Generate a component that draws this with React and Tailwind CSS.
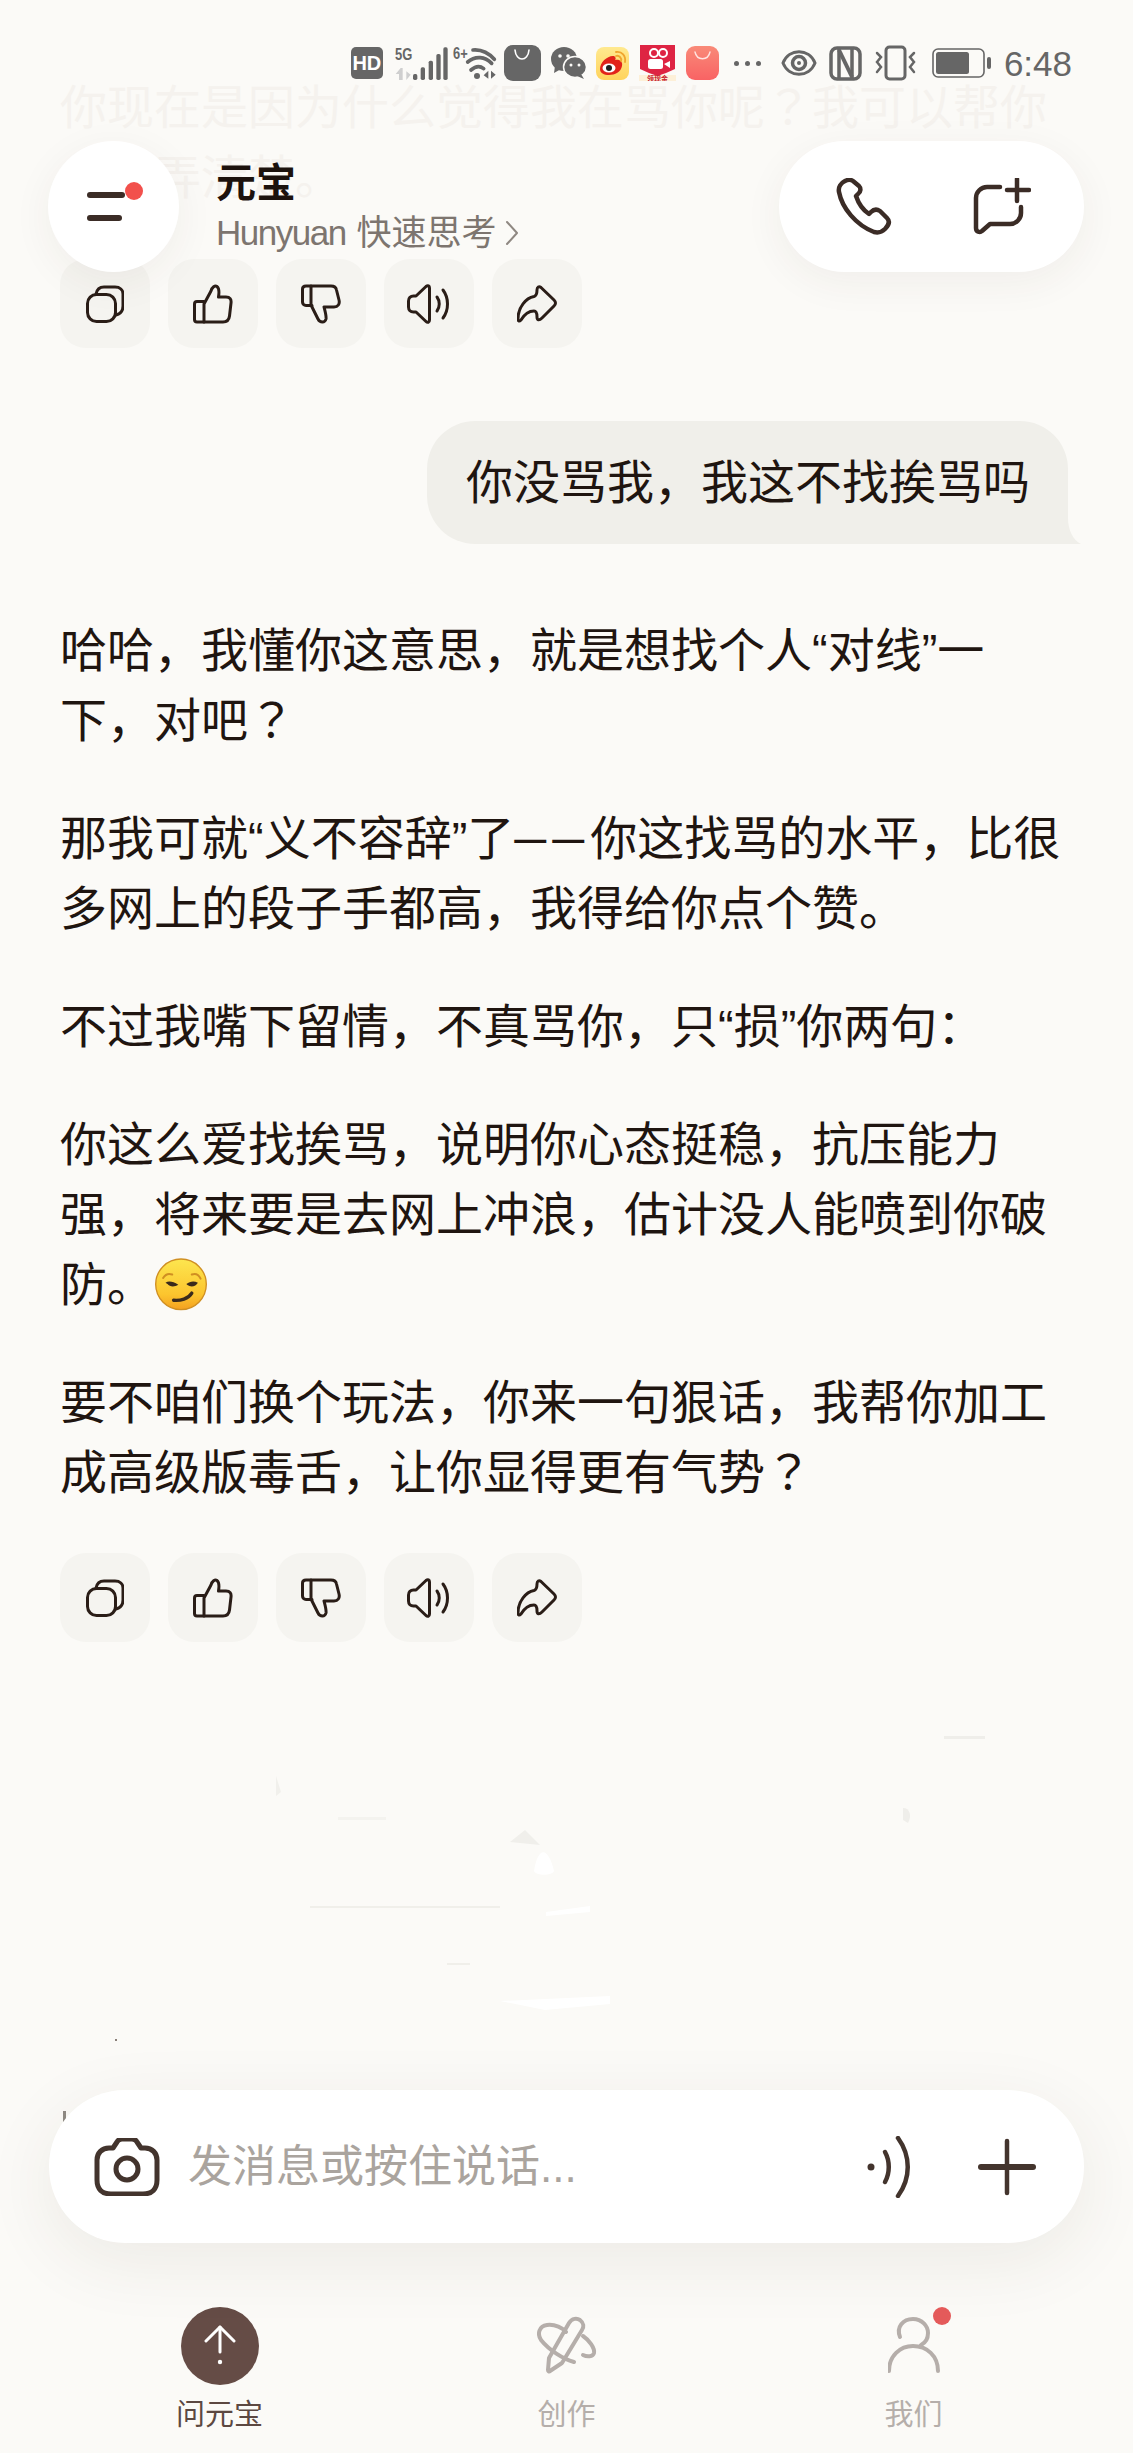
const sans = 'font-["Liberation_Sans","Noto_Sans_CJK_SC",sans-serif]';

function CopyIcon() {
  return (
    <svg width="38" height="38" viewBox="0 0 38 38" fill="none" stroke="#2a1d17" strokeWidth="3" strokeLinejoin="round" strokeLinecap="round">
      <rect x="1.500" y="9.500" width="28" height="27" rx="9" />
      <path d="M10 9C11 4 14 2 18 2H29C34 2 37 5 37 9V21C37 26 34 29 30 30" />
    </svg>
  );
}

function ThumbUpIcon() {
  return (
    <svg width="40" height="40" viewBox="0 0 40 40" fill="none" stroke="#2a1d17" strokeWidth="3" strokeLinejoin="round" strokeLinecap="round">
      <path d="M11 38H4C2.500 38 1.500 37 1.500 35.500V20C1.500 18.500 2.500 17.500 4 17.500H11" />
      <path d="M11 38V20L18 7C19 3 22 1 24 2.500C26 4 26.500 7 25.500 13H33C37 13 38.500 15.500 38 19L36.500 32C36 36 34 38 30 38Z" />
    </svg>
  );
}

function ThumbDownIcon() {
  return (
    <svg width="40" height="40" viewBox="0 0 40 40" fill="none" stroke="#2a1d17" strokeWidth="3" strokeLinejoin="round" strokeLinecap="round">
      <path d="M10 2H5C3 2 1.500 3 1.500 5V18C1.500 20 3 21.500 5 21.500H11" />
      <path d="M10 2V21L17 35C19 39 24 39 25 35C25.500 32 24 27 23 23H33C37 23 39 20 38 16L35.500 6C35 3 33 2 30 2Z" />
    </svg>
  );
}

function SpeakerIcon() {
  return (
    <svg width="44" height="40" viewBox="0 0 44 40" fill="none" stroke="#2a1d17" strokeWidth="3" strokeLinejoin="round" strokeLinecap="round">
      <path d="M9 12L19 2.500C21 1 22.500 2 22.500 4V36C22.500 38.500 20.500 39 19 37.500L9 28H6.500C3.500 28 1.500 26 1.500 23V17C1.500 14 3.500 12 6.500 12Z" />
      <path d="M30 13C33 17 33 23 30 27" />
      <path d="M36 6C42 14 42 26 36 34" />
    </svg>
  );
}

function ShareIcon() {
  return (
    <svg width="40" height="38" viewBox="0 0 40 38" fill="none" stroke="#2a1d17" strokeWidth="3" strokeLinejoin="round" strokeLinecap="round">
      <path d="M20 5C20 2 22 1 24 2.500L37 15C39 17 39 19 37 21L25 33C22 36 20 35 20 32C20 29 19 26 17 26C11 26 7 30 4 35C2 37 1 36 1 34C1 22 9 13 17 11.500C19 11 20 9 20 5Z" />
    </svg>
  );
}

const ACTIONS = [CopyIcon, ThumbUpIcon, ThumbDownIcon, SpeakerIcon, ShareIcon];

function ActionRow({ className }) {
  return (
    <div className={`flex gap-[18px] ${className}`}>
      {ACTIONS.map((Icon, i) => (
        <div key={i} className="w-[90px] h-[89px] rounded-[26px] bg-[#f5f4f0] flex items-center justify-center">
          <Icon />
        </div>
      ))}
    </div>
  );
}

function StatusBar() {
  return (
    <div className={`flex items-center justify-end h-[38px] pr-[61px] text-[#666666] ${sans}`}>
      <div className="w-[32px] h-[32px] rounded-[5px] bg-[#666666] text-white text-[20px] font-bold flex items-center justify-center leading-none">HD</div>
      {/* 5G + signal */}
      <svg className="ml-[11px]" width="55" height="34" viewBox="150 24 165 102">
        <text x="153" y="66" fontSize="50" fontWeight="700" fill="#666666" textLength="52" lengthAdjust="spacingAndGlyphs" fontFamily="Liberation Sans">5G</text>
        <path d="M170 90L155 108H165V126H176V90Z" fill="#cfcfcf" />
        <path d="M187 100V126L200 110Z" fill="#cfcfcf" />
        <rect x="207" y="108" width="13" height="18" rx="5" fill="#666666" />
        <rect x="230" y="88" width="13" height="38" rx="5" fill="#666666" />
        <rect x="254" y="68" width="13" height="58" rx="5" fill="#666666" />
        <rect x="277" y="48" width="13" height="78" rx="5" fill="#666666" />
        <rect x="298" y="28" width="13" height="98" rx="5" fill="#666666" />
      </svg>
      {/* wifi */}
      <svg className="ml-[3px]" width="45" height="36" viewBox="325 25 135 108" fill="none" stroke="#666666" strokeWidth="11" strokeLinecap="round">
        <text x="328" y="68" fontSize="48" fontWeight="700" fill="#666666" stroke="none" textLength="44" lengthAdjust="spacingAndGlyphs" fontFamily="Liberation Sans">6+</text>
        <path d="M388 40C412 38 436 50 452 68" />
        <path d="M372 76C396 56 424 60 444 80" />
        <path d="M382 100C396 88 410 88 420 96" />
        <circle cx="400" cy="118" r="9" fill="#666666" stroke="none" />
        <path d="M420 116L434 102V126ZM442 102V126L456 114Z" fill="#666666" stroke="none" />
      </svg>
      {/* shopping bag */}
      <div className="ml-[7px] w-[37px] h-[36px] rounded-[9px] bg-[#666666] flex items-start justify-center">
        <svg width="20" height="16" viewBox="0 0 20 16" fill="none" stroke="#ffffff" strokeWidth="1.600" strokeLinecap="round"><path d="M3 5C4 17 16 17 17 5" /></svg>
      </div>
      {/* wechat */}
      <svg className="ml-[9px]" width="37" height="34" viewBox="0 0 37 34">
        <ellipse cx="14" cy="13" rx="13" ry="12" fill="#666666" />
        <path d="M5 20l-1 7 7-4z" fill="#666666" />
        <ellipse cx="25" cy="21" rx="11.500" ry="10.500" fill="#666666" stroke="#fbfaf7" strokeWidth="1.500" />
        <path d="M31 28l3 5-7-3z" fill="#666666" />
        <circle cx="10" cy="10" r="1.800" fill="#fbfaf7" />
        <circle cx="18" cy="10" r="1.800" fill="#fbfaf7" />
        <circle cx="21" cy="19" r="1.500" fill="#fbfaf7" />
        <circle cx="29" cy="19" r="1.500" fill="#fbfaf7" />
      </svg>
      {/* weibo */}
      <svg className="ml-[9px]" width="33" height="33" viewBox="0 0 33 33">
        <defs>
          <linearGradient id="weibo-bg" x1="0" y1="0" x2="0" y2="1">
            <stop offset="0%" stopColor="#ffe98f" />
            <stop offset="100%" stopColor="#ffd35c" />
          </linearGradient>
        </defs>
        <rect width="33" height="33" rx="8" fill="url(#weibo-bg)" />
        <path d="M4 22C4 15 12 8 18 9C20 10 20 12 19 13C24 12 27 15 26 19C25 25 19 28 13 28C8 28 4 26 4 22Z" fill="#e2231a" />
        <ellipse cx="13" cy="21" rx="6.500" ry="4.500" fill="#fff" />
        <circle cx="13" cy="21" r="3" fill="#222" />
        <path d="M20 5C26 4 30 9 29 15M20 9C23 8 26 11 25 14" fill="none" stroke="#f0a52e" strokeWidth="1.800" strokeLinecap="round" />
      </svg>
      {/* kuaishou */}
      <svg className="ml-[10px]" width="37" height="36" viewBox="0 0 37 36">
        <rect y="30" width="37" height="6" fill="#fdf0d8" />
        <path d="M1 0H36V24C30 27 24 29 18.500 31C13 29 7 27 1 24Z" fill="#de2443" />
        <circle cx="15" cy="8" r="4" fill="none" stroke="#fff" strokeWidth="2" />
        <circle cx="24" cy="8" r="4" fill="none" stroke="#fff" strokeWidth="2" />
        <rect x="9" y="14" width="15" height="10" rx="2.500" fill="#fff" />
        <path d="M25 19l6-3v7z" fill="#fff" />
        <text x="18.500" y="35.500" fontSize="7" fontWeight="700" fill="#c8202c" textAnchor="middle" fontFamily="Noto Sans CJK SC">领现金</text>
      </svg>
      {/* red bag */}
      <svg className="ml-[10px]" width="33" height="34" viewBox="0 0 33 34">
        <defs>
          <linearGradient id="bag-bg" x1="0" y1="0" x2="0" y2="1">
            <stop offset="0%" stopColor="#f98a78" />
            <stop offset="100%" stopColor="#f96364" />
          </linearGradient>
        </defs>
        <rect width="33" height="34" rx="9" fill="url(#bag-bg)" />
        <path d="M9 6C11 15 22 15 24 6" fill="none" stroke="#ffe3df" strokeWidth="1.400" strokeLinecap="round" />
      </svg>
      {/* overflow dots */}
      <div className="ml-[15px] w-[27px] flex justify-between">
        <span className="w-[5px] h-[5px] rounded-full bg-[#666666]" />
        <span className="w-[5px] h-[5px] rounded-full bg-[#666666]" />
        <span className="w-[5px] h-[5px] rounded-full bg-[#666666]" />
      </div>
      {/* eye */}
      <svg className="ml-[20px]" width="36" height="28" viewBox="0 0 36 28" fill="none" stroke="#666666" strokeWidth="3">
        <path d="M2 14C8 -1 28 -1 34 14C28 29 8 29 2 14Z" />
        <circle cx="18" cy="14" r="6.500" strokeWidth="3.500" />
        <circle cx="18" cy="14" r="2" fill="#666666" stroke="none" />
      </svg>
      {/* nfc */}
      <svg className="ml-[12px]" width="33" height="35" viewBox="0 0 33 35" fill="none" stroke="#666666">
        <rect x="2" y="2" width="29" height="31" rx="6" strokeWidth="3.500" />
        <path d="M10 3V32M23 3V32" strokeWidth="3.500" />
        <path d="M10 4L23 31" strokeWidth="4" />
      </svg>
      {/* vibrate */}
      <svg className="ml-[12px]" width="43" height="36" viewBox="0 0 43 36" fill="none" stroke="#666666" strokeWidth="2.500" strokeLinecap="round">
        <rect x="12" y="2" width="19" height="32" rx="3.500" strokeWidth="3" />
        <path d="M3 8l4 4-4 5 4 5-4 5" />
        <path d="M40 8l-4 4 4 5-4 5 4 5" />
      </svg>
      {/* battery */}
      <svg className="ml-[15px]" width="60" height="30" viewBox="0 0 60 30" fill="none">
        <rect x="1" y="1" width="51" height="28" rx="5" stroke="#666666" strokeWidth="1.600" />
        <rect x="4" y="4" width="33" height="22" rx="2.500" fill="#666666" />
        <rect x="55" y="9" width="4" height="12" rx="2" fill="#666666" />
      </svg>
      <span className="ml-[12px] text-[35px] leading-none">6:48</span>
    </div>
  );
}

function Header() {
  return (
    <div className={`flex items-center justify-between pl-[48px] pr-[49px] mt-[59px] h-[131px] ${sans}`}>
      <div className="flex items-center">
        <div className="relative w-[131px] h-[131px] rounded-full bg-white shadow-[0_10px_40px_rgba(70,50,30,0.06)] flex flex-col justify-center gap-[17px] pl-[39px]">
          <span className="w-[38px] h-[6px] rounded-full bg-[#3b2c26]" />
          <span className="w-[35px] h-[6px] rounded-full bg-[#3b2c26]" />
          <span className="absolute left-[77px] top-[41px] w-[18px] h-[18px] rounded-full bg-[#f2504c]" />
        </div>
        <div className="ml-[37px] flex flex-col">
          <span className="text-[40px] leading-[50px] font-semibold text-[#1c120d]">元宝</span>
          <span className="mt-[2px] flex items-center text-[35px] leading-[46px] text-[#7d756f]">
            <span className="tracking-[-1.500px] mr-[11px]">Hunyuan</span>快速思考
            <svg className="ml-[8px]" width="14" height="26" viewBox="0 0 14 26" fill="none" stroke="#8f8882" strokeWidth="2" strokeLinecap="round" strokeLinejoin="round"><path d="M2 2L12 13L2 24" /></svg>
          </span>
        </div>
      </div>
      <div className="w-[305px] h-[131px] rounded-full bg-white shadow-[0_10px_40px_rgba(70,50,30,0.06)] flex items-center pl-[57px] gap-[81px]">
        <svg width="56" height="58" viewBox="0 0 56 58" fill="none" stroke="#3b2c26" strokeWidth="4.500" strokeLinejoin="round">
          <path d="M9 3C5 5 2 9 3 14C6 30 20 47 38 54C42 55 46 54 49 51C53 47 54 43 51 40L44 33C41 31 38 31 35 34L33 36C27 32 22 24 20 18L22 16C25 14 25 10 23 8L17 3C14 1 11 2 9 3Z" />
        </svg>
        <svg width="58" height="58" viewBox="0 0 58 58" fill="none" stroke="#3b2c26" strokeWidth="4.500" strokeLinecap="round" strokeLinejoin="round">
          <path d="M27 9H14C8 9 3 14 3 20V50C3 54 7 55 9 53L17 46H37C43 46 48 41 48 35V29" />
          <path d="M34 12H56M44 1V23" />
        </svg>
      </div>
    </div>
  );
}

function Smirk() {
  return (
    <svg className="inline-block align-[-10px]" width="54" height="54" viewBox="78 22 160 160">
      <defs>
        <linearGradient id="smirk-face" x1="0" y1="0" x2="0" y2="1">
          <stop offset="0%" stopColor="#fde64f" />
          <stop offset="70%" stopColor="#fcc52e" />
          <stop offset="100%" stopColor="#f4a020" />
        </linearGradient>
      </defs>
      <circle cx="158" cy="103" r="75" fill="url(#smirk-face)" stroke="#d08f22" strokeWidth="4" />
      <path d="M105 84C112 73 122 70 132 74" fill="none" stroke="#d08f22" strokeWidth="6" strokeLinecap="round" />
      <path d="M190 74C200 70 210 74 216 86" fill="none" stroke="#d08f22" strokeWidth="6" strokeLinecap="round" />
      <path d="M112 98C122 92 135 95 150 104C138 112 124 110 118 102Z" fill="#3a2a1c" />
      <path d="M174 102C184 94 196 92 208 98C204 106 196 110 186 109C182 108 178 106 174 102Z" fill="#3a2a1c" />
      <path d="M136 150C156 152 180 146 190 129" fill="none" stroke="#3a2a1c" strokeWidth="10" strokeLinecap="round" />
    </svg>
  );
}

function Para({ children }) {
  return <p className="mb-[48px] last:mb-0">{children}</p>;
}

// the full-width question mark sits centred in the reference, as in the TC cut
function Q() {
  return <span className='font-["Noto_Sans_CJK_TC"] leading-none'>？</span>;
}

function Chat() {
  return (
    <div className={`relative flex-1 mt-[-272px] pt-[73px] pl-[60px] pr-[40px] text-[47px] leading-[70px] text-[#1f1510] ${sans}`}>
      <p className="text-[#f5f2ee]">你现在是因为什么觉得我在骂你呢<Q />我可以帮你<br />一起弄清楚。</p>
      <ActionRow className="mt-[46px]" />

      <div className="mt-[73px] flex justify-end pr-[25px]">
        <div className="relative h-[123px] rounded-[48px] rounded-br-none bg-[#f0efea] pl-[39px] pr-[38px] flex items-center">
          你没骂我，我这不找挨骂吗
          <svg className="absolute left-full bottom-0" width="13" height="26" viewBox="0 0 13 26"><path d="M0 0C0 12 5 22 13 26H0Z" fill="#f0efea" /></svg>
        </div>
      </div>

      <div className="mt-[72px]">
        <Para>哈哈，我懂你这意思，就是想找个人“对线”一<br />下，对吧<Q /></Para>
        <Para>那我可就“义不容辞”了<span className="text-[32px] leading-none font-bold tracking-[6px] align-[5px]">——</span>你这找骂的水平，比很<br />多网上的段子手都高，我得给你点个赞。</Para>
        <Para>不过我嘴下留情，不真骂你，只“损”你两句：</Para>
        <Para>你这么爱找挨骂，说明你心态挺稳，抗压能力<br />强，将来要是去网上冲浪，估计没人能喷到你破<br />防。<Smirk /></Para>
        <Para>要不咱们换个玩法，你来一句狠话，我帮你加工<br />成高级版毒舌，让你显得更有气势<Q /></Para>
      </div>

      <ActionRow className="mt-[45px]" />

      {/* erased watermark leftovers */}
      <svg className="absolute left-0 top-[1720px] pointer-events-none" width="1133" height="360" viewBox="0 0 1133 360" fill="none">
        <path d="M276 56L281 72L276 76Z" fill="#f1f0ec" />
        <path d="M338 97H386V100H338Z" fill="#f4f3ef" />
        <path d="M944 16H985V19H944Z" fill="#efeeea" />
        <path d="M903 88C910 88 912 96 908 103L903 100Z" fill="#efeeea" />
        <path d="M510 122L540 125L525 110Z" fill="#f0efeb" />
        <path d="M534 151C538 126 548 126 554 151C552 156 536 156 534 151Z" fill="#ffffff" />
        <path d="M310 186H500V188H310Z" fill="#f0efea" />
        <path d="M546 192L590 186L590 192L546 196Z" fill="#ffffff" />
        <path d="M447 243H470V245H447Z" fill="#f0efea" />
        <path d="M500 281L610 276V284L545 290Z" fill="#ffffff" />
        <rect x="115" y="319" width="2" height="2" fill="#8a8078" />
      </svg>
      <span className="absolute left-[63px] top-[2111px] w-[3px] h-[14px] bg-[#8f8a84]" />
    </div>
  );
}

function InputBar() {
  return (
    <div className={`relative mx-[49px] h-[153px] rounded-[76px] bg-white shadow-[0_18px_70px_rgba(70,50,30,0.08)] flex items-center pl-[45px] pr-[48px] ${sans}`}>
      <svg width="66" height="58" viewBox="0 0 66 58" fill="none" stroke="#43342d" strokeWidth="5" strokeLinejoin="round">
        <path d="M3 22C3 15 8 10 15 10H19L23 4C24 2 26 1 28 1H38C40 1 42 2 43 4L47 10H51C58 10 63 15 63 22V42C63 51 58 56 49 56H17C8 56 3 51 3 42Z" />
        <circle cx="33" cy="31" r="11" />
      </svg>
      <span className="ml-[28px] text-[44px] leading-none text-[#aaa49e]">发消息或按住说话...</span>
      <svg className="ml-auto" width="46" height="62" viewBox="0 0 46 62" fill="none" stroke="#43342d" strokeWidth="4.500" strokeLinecap="round">
        <circle cx="4" cy="31" r="3.500" fill="#43342d" stroke="none" />
        <path d="M18 16C23 25 23 37 18 46" />
        <path d="M31 2C44 20 44 42 31 60" />
      </svg>
      <svg className="ml-[65px]" width="58" height="58" viewBox="0 0 58 58" fill="none" stroke="#43342d" strokeLinecap="round">
        <path d="M3 29H55" strokeWidth="6" />
        <path d="M29 3V55" strokeWidth="4.500" />
      </svg>
    </div>
  );
}

function TabBar() {
  return (
    <div className={`grid grid-cols-3 h-[153px] px-[46px] mt-[57px] ${sans}`}>
      <div className="flex flex-col items-center">
        <div className="h-[78px] w-[78px] mt-[7px] rounded-full bg-[#654c46] flex items-center justify-center">
          <svg width="32" height="56" viewBox="0 0 32 56" fill="none" stroke="#ffffff" strokeWidth="3" strokeLinecap="round" strokeLinejoin="round">
            <path d="M2 23L16 9L30 23" />
            <path d="M16 9V34" />
            <circle cx="16" cy="44" r="2.200" fill="#ffffff" stroke="none" />
          </svg>
        </div>
        <span className="mt-[12px] text-[29px] leading-[36px] text-[#5c4841]">问元宝</span>
      </div>
      <div className="flex flex-col items-center">
        <svg className="mt-[15px]" width="60" height="61" viewBox="28 15 60 61" fill="none" stroke="#b5aeaa" strokeWidth="4" strokeLinecap="round" strokeLinejoin="round">
          <path d="M40 58L60 23C63 18 68 18 71 20C75 23 75 27 73 30L53 63L41 71C40 72 39 71 39 70Z" />
          <path d="M65 62C54 59 40 50 32 40C28 34 30 26 38 25C46 24 54 28 57 32" />
          <path d="M74 36C80 40 86 48 85 53C84 57 78 57 74 55" />
        </svg>
        <span className="mt-[21px] text-[29px] leading-[36px] text-[#b5aeaa]">创作</span>
      </div>
      <div className="relative flex flex-col items-center">
        <svg className="mt-[17px]" width="52" height="56" viewBox="27 17 52 56" fill="none" stroke="#b5aeaa" strokeWidth="4" strokeLinecap="round">
          <path d="M39 37C35 27 42 19 52 19C61 19 67 26 67 33C67 39 64 43 60 45" />
          <path d="M28 71C28 56 39 46 52 46C66 46 77 56 77 71" />
        </svg>
        <span className="absolute left-[calc(50%+19px)] top-[7px] w-[18px] h-[18px] rounded-full bg-[#e45a5a]" />
        <span className="mt-[24px] text-[29px] leading-[36px] text-[#b5aeaa]">我们</span>
      </div>
    </div>
  );
}

export default function App() {
  return (
    <div className="flex flex-col w-[1133px] h-[2453px] overflow-hidden bg-[#fbfaf7]">
      <div className="relative z-10 pt-[44px]">
        <StatusBar />
        <Header />
      </div>
      <Chat />
      <InputBar />
      <TabBar />
    </div>
  );
}
